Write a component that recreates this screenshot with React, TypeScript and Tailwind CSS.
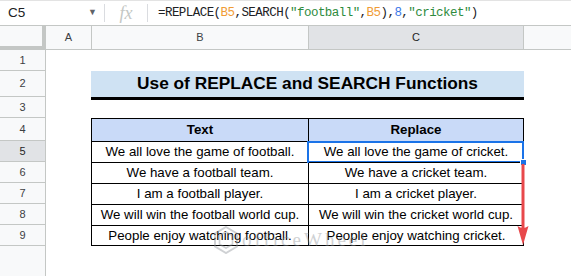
import React from "react";

const rows = [
  { n: 1, h: "h-[21px]" },
  { n: 2, h: "h-[26px]" },
  { n: 3, h: "h-[21px]" },
  { n: 4, h: "h-[23px]" },
  { n: 5, h: "h-[21px]" },
  { n: 6, h: "h-[21px]" },
  { n: 7, h: "h-[21px]" },
  { n: 8, h: "h-[21px]" },
  { n: 9, h: "h-[21px]" },
];

const data: Record<number, [string, string]> = {
  5: ["We all love the game of football.", "We all love the game of cricket."],
  6: ["We have a football team.", "We have a cricket team."],
  7: ["I am a football player.", "I am a cricket player."],
  8: ["We will win the football world cup.", "We will win the cricket world cup."],
  9: ["People enjoy watching football.", "People enjoy watching cricket."],
};

function FormulaBar() {
  return (
    <div className="flex h-[26px] items-center border-t border-b border-t-[#e3e3e3] border-b-[#c4c7c5] bg-white">
      <div className="flex w-[104px] items-center justify-between pl-[8px] pr-[7px] text-[13.5px] text-[#202124]">
        <span>C5</span>
        <span className="text-[9px] text-[#5f6368]">▼</span>
      </div>
      <div className="h-[18px] w-px bg-[#dadce0]" />
      <div className="flex w-[42px] justify-center font-['Liberation_Serif',serif] text-[18px] italic text-[#c4c7c5]">
        fx
      </div>
      <div className="h-[18px] w-px bg-[#dadce0]" />
      <div className="pl-[10px] font-['Liberation_Mono',monospace] text-[12.5px] tracking-[-0.55px] text-[#202124]">
        =REPLACE(<span className="text-[#f09c35]">B5</span>,SEARCH(
        <span className="text-[#2e8b3d]">"football"</span>,
        <span className="text-[#f09c35]">B5</span>),
        <span className="text-[#3b78e7]">8</span>,
        <span className="text-[#2e8b3d]">"cricket"</span>)
      </div>
    </div>
  );
}

function ColumnHeaders() {
  return (
    <div className="flex h-[24px] border-b border-[#c4c7c5] bg-[#f8f9fa] text-[11px] text-[#3c4043]">
      <div className="h-[24px] w-[46px] shrink-0 border-r-4 border-b-4 border-[#c4c7c5] bg-[#f8f9fa]" />
      <div className="flex w-[46px] shrink-0 items-center justify-center border-r border-[#c4c7c5]">A</div>
      <div className="flex w-[217px] shrink-0 items-center justify-center border-r border-[#c4c7c5]">B</div>
      <div className="flex w-[215px] shrink-0 items-center justify-center border-r border-[#c4c7c5] bg-[#e1e3e6] text-[#1f1f1f]">
        C
      </div>
      <div className="flex-1" />
    </div>
  );
}

function Watermark() {
  return (
    <div className="pointer-events-none absolute left-[214px] top-[226px] flex items-center gap-[4px] opacity-40">
      <svg width="24" height="28" viewBox="0 0 24 28">
        <path d="M12 1 L23 7.5 V20.5 L12 27 L1 20.5 V7.5 Z" fill="none" stroke="#8a8f95" strokeWidth="2" />
        <path d="M12 6 L18.5 9.8 V18.2 L12 22 L5.5 18.2 V9.8 Z" fill="none" stroke="#8a8f95" strokeWidth="1.6" />
      </svg>
      <span className="font-['Liberation_Serif',serif] text-[19px] tracking-[3px] text-[#8a8f95]">officeWheel</span>
    </div>
  );
}

export default function App() {
  return (
    <div className="relative h-[276px] w-[571px] overflow-hidden bg-white font-['Liberation_Sans',Arial,sans-serif]">
      <FormulaBar />
      <ColumnHeaders />
      <div className="flex flex-col">
        {rows.map((r) => {
          const d = data[r.n];
          const inTable = r.n >= 4;
          const tableCls = inTable
            ? "border-t border-black" + (r.n === 9 ? " border-b" : "")
            : "";
          return (
            <div key={r.n} className={`flex ${r.h}`}>
              <div
                className={`flex w-[46px] shrink-0 items-center justify-center border-r border-b border-[#c4c7c5] text-[11px] ${
                  r.n === 5 ? "bg-[#e1e3e6] text-[#1f1f1f]" : "bg-[#f8f9fa] text-[#3c4043]"
                }`}
              >
                {r.n}
              </div>
              <div className="w-[45px] shrink-0" />
              {r.n === 2 ? (
                <div className="relative z-10 flex w-[433px] shrink-0 items-center justify-center bg-[#cfe2f3] text-[17.3px] font-bold text-black shadow-[0_3px_0_#000]">
                  Use of REPLACE and SEARCH Functions
                </div>
              ) : inTable ? (
                <>
                  <div
                    className={`flex w-[218px] shrink-0 items-center justify-center border-x border-black text-[13.3px] text-black ${tableCls} ${
                      r.n === 4 ? "bg-[#c9daf8] font-bold" : ""
                    }`}
                  >
                    {r.n === 4 ? "Text" : d[0]}
                  </div>
                  <div
                    className={`relative flex w-[215px] shrink-0 items-center justify-center border-r border-black text-[13.3px] text-black ${tableCls} ${
                      r.n === 4 ? "bg-[#c9daf8] font-bold" : ""
                    }`}
                  >
                    {r.n === 4 ? "Replace" : d[1]}
                    {r.n === 5 && (
                      <>
                        <div className="absolute -top-px -bottom-px -left-[2px] -right-px border-2 border-[#1a73e8]" />
                        <div className="absolute -bottom-[4px] -right-[4px] z-20 h-[7px] w-[7px] border border-white bg-[#1a73e8]" />
                      </>
                    )}
                  </div>
                </>
              ) : null}
              <div className="flex-1" />
            </div>
          );
        })}
        <div className="flex h-[40px]">
          <div className="w-[46px] shrink-0 border-r border-[#c4c7c5] bg-[#f8f9fa]" />
        </div>
      </div>
      <Watermark />
      <svg className="pointer-events-none absolute left-[515px] top-[164px] z-30" width="16" height="82" viewBox="0 0 16 82">
        <line x1="8" y1="0" x2="8" y2="68" stroke="#e8484b" strokeWidth="3" />
        <path d="M2.5 62 Q8 66 13.5 62 L8 81 Z" fill="#e8484b" />
      </svg>
    </div>
  );
}
